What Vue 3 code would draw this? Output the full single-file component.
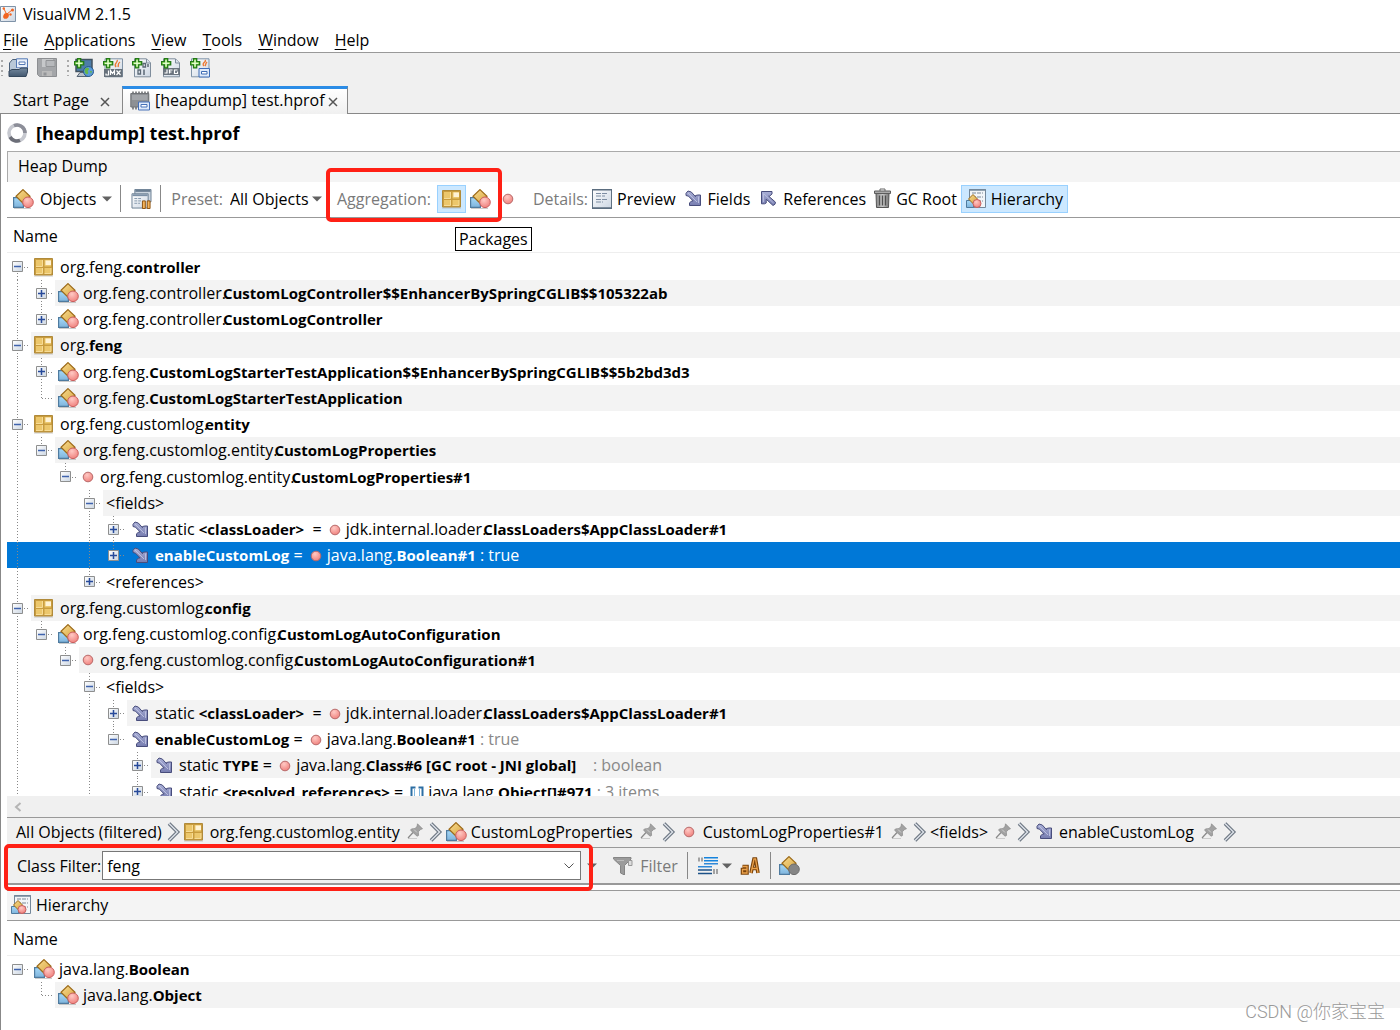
<script setup>
import { ref } from 'vue'

const menus = ['File', 'Applications', 'View', 'Tools', 'Window', 'Help']
const classFilter = ref('feng')
const preset = ref('All Objects')

const t = (text) => ({ text, kind: 'plain' })
const b = (text) => ({ text, kind: 'bold' })
const lap = (text) => ({ text, kind: 'bold lap' })
const dim = (text) => ({ text, kind: 'dim' })
const ball = { icon: 'ball' }
const array = { icon: 'array' }

// guides: which ancestor columns carry a line through this row
const rows = [
  { guides: [], first: true, box: 'minus', icon: 'package', parts: [t('org.feng.'), b('controller')] },
  { guides: [1], box: 'plus', icon: 'class', parts: [t('org.feng.controller.'), lap('CustomLogController$$EnhancerBySpringCGLIB$$105322ab')] },
  { guides: [1], last: true, box: 'plus', icon: 'class', parts: [t('org.feng.controller.'), lap('CustomLogController')] },
  { guides: [], box: 'minus', icon: 'package', parts: [t('org.'), b('feng')] },
  { guides: [1], box: 'plus', icon: 'class', parts: [t('org.feng.'), b('CustomLogStarterTestApplication$$EnhancerBySpringCGLIB$$5b2bd3d3')] },
  { guides: [1], last: true, icon: 'class', parts: [t('org.feng.'), b('CustomLogStarterTestApplication')] },
  { guides: [], box: 'minus', icon: 'package', parts: [t('org.feng.customlog.'), lap('entity')] },
  { guides: [1], last: true, box: 'minus', icon: 'class', parts: [t('org.feng.customlog.entity.'), lap('CustomLogProperties')] },
  { guides: [1, 0], last: true, box: 'minus', icon: 'ball', parts: [t('org.feng.customlog.entity.'), lap('CustomLogProperties#1')] },
  { guides: [1, 0, 0], box: 'minus', parts: [t('<fields>')] },
  { guides: [1, 0, 0, 1], box: 'plus', icon: 'field', parts: [t('static '), b('<classLoader>'), t('  = '), ball, t('jdk.internal.loader.'), lap('ClassLoaders$AppClassLoader#1')] },
  { guides: [1, 0, 0, 1], last: true, selected: true, box: 'plus', icon: 'field', parts: [b('enableCustomLog'), t(' = '), ball, t('java.lang.'), b('Boolean#1'), dim(' : true')] },
  { guides: [1, 0, 0], last: true, box: 'plus', parts: [t('<references>')] },
  { guides: [], box: 'minus', icon: 'package', parts: [t('org.feng.customlog.'), lap('config')] },
  { guides: [1], last: true, box: 'minus', icon: 'class', parts: [t('org.feng.customlog.config.'), lap('CustomLogAutoConfiguration')] },
  { guides: [1, 0], last: true, box: 'minus', icon: 'ball', parts: [t('org.feng.customlog.config.'), lap('CustomLogAutoConfiguration#1')] },
  { guides: [1, 0, 0], box: 'minus', parts: [t('<fields>')] },
  { guides: [1, 0, 0, 1], box: 'plus', icon: 'field', parts: [t('static '), b('<classLoader>'), t('  = '), ball, t('jdk.internal.loader.'), lap('ClassLoaders$AppClassLoader#1')] },
  { guides: [1, 0, 0, 1], last: true, box: 'minus', icon: 'field', parts: [b('enableCustomLog'), t(' = '), ball, t('java.lang.'), b('Boolean#1'), dim(' : true')] },
  { guides: [1, 0, 0, 1, 0], box: 'plus', icon: 'field', parts: [t('static '), b('TYPE'), t(' = '), ball, t('java.lang.'), b('Class#6 [GC root - JNI global]'), dim('    : boolean')] },
  { guides: [1, 0, 0, 1, 0], box: 'plus', icon: 'field', parts: [t('static '), b('<resolved_references>'), t(' = '), array, t('java.lang.'), b('Object[]#971'), dim(' : 3 items')] },
]

const hierarchy = [
  { guides: [], first: true, last: true, box: 'minus', icon: 'class', parts: [t('java.lang.'), b('Boolean')] },
  { guides: [0], last: true, icon: 'class', parts: [t('java.lang.'), b('Object')] },
]

const trees = { main: rows, sub: hierarchy }

const crumbs = [
  { icon: 'package', text: 'org.feng.customlog.entity' },
  { icon: 'class', text: 'CustomLogProperties' },
  { icon: 'ball', text: 'CustomLogProperties#1' },
  { text: '<fields>' },
  { icon: 'field', text: 'enableCustomLog' },
]

const launchers = ['remote', 'jmx', 'core', 'jfr', 'snapshot']

const ownLine = (row) => {
  if (row.first && row.last) return 'none'
  if (row.first) return 'lower'
  return row.last ? 'upper' : 'full'
}
</script>

<template>
  <svg class="sheet" aria-hidden="true">
    <defs>
      <linearGradient id="gold" x1="0" y1="0" x2="1" y2="1"><stop offset="0" stop-color="#f8dc90" /><stop offset="1" stop-color="#d9a541" /></linearGradient>
      <linearGradient id="sky" x1="0" y1="0" x2="0" y2="1"><stop offset="0" stop-color="#a5d8f7" /><stop offset="1" stop-color="#7fb4dc" /></linearGradient>
      <radialGradient id="rose" cx=".4" cy=".3" r=".7"><stop offset="0" stop-color="#ffc9c4" /><stop offset="1" stop-color="#f0837f" /></radialGradient>
      <linearGradient id="violet" x1="0" y1="0" x2="0" y2="1"><stop offset="0" stop-color="#a9afd6" /><stop offset="1" stop-color="#777db0" /></linearGradient>
      <linearGradient id="paper" x1="0" y1="0" x2="1" y2="1"><stop offset="0" stop-color="#fff" /><stop offset="1" stop-color="#ccd6e2" /></linearGradient>
      <linearGradient id="steel" x1="0" y1="0" x2="0" y2="1"><stop offset="0" stop-color="#74899f" /><stop offset="1" stop-color="#43586f" /></linearGradient>
      <linearGradient id="tin" x1="0" y1="0" x2="1" y2="0"><stop offset="0" stop-color="#888" /><stop offset=".5" stop-color="#c8c8c8" /><stop offset="1" stop-color="#777" /></linearGradient>

      <symbol id="i-class" viewBox="0 0 21 20">
        <path d="M1 19.500h17" stroke="#999" stroke-opacity=".5" />
        <path d="M.6 8.600h9.800v9.800H.6z" fill="url(#sky)" stroke="#4f7b9f" stroke-width="1.200" />
        <path d="M10 .6 17 7.300l-7 6.900-7-6.900z" fill="url(#gold)" stroke="#9c6a19" stroke-width="1.200" />
        <circle cx="15" cy="13.300" r="5.300" fill="url(#rose)" stroke="#c9605f" />
      </symbol>
      <symbol id="i-class-off" viewBox="0 0 21 20">
        <path d="M.6 8.600h9.800v9.800H.6z" fill="url(#sky)" stroke="#4f7b9f" stroke-width="1.200" />
        <path d="M10 .6 17 7.300l-7 6.900-7-6.900z" fill="url(#gold)" stroke="#9c6a19" stroke-width="1.200" />
        <circle cx="15" cy="13.300" r="5.300" fill="#858585" stroke="#6c6c6c" />
      </symbol>
      <symbol id="i-package" viewBox="0 0 20 20">
        <path d="M0 19h19" stroke="#999" stroke-opacity=".5" />
        <path d="M.5 1.500h18v16.500H.5z" fill="#c99c3e" stroke="#b08a3a" />
        <path d="M2 3h6.500v6.500H2zM2 11h6.500v5.500H2zM10.500 11H17v5.500h-6.500zM10.500 3H17v6.500h-6.500z" fill="#ecc76c" />
        <path d="M11.500 3.500H17V8h-5.500z" fill="#fff3d6" />
        <path d="M2 9.500h6.500V3M2 16.500h6.500V11M10.500 16.500H17V11" fill="none" stroke="#f7dc96" />
      </symbol>
      <symbol id="i-ball" viewBox="0 0 12 12">
        <circle cx="6" cy="6" r="4.800" fill="url(#rose)" stroke="#b86a6a" />
      </symbol>
      <symbol id="i-field" viewBox="0 0 17 17">
        <path d="M1 3.300 3 1l3.300 1 4.200 4.700V5.500L13 5h2.500v10.500H4.500V13l2-2h1.700L3.500 6.200 1 5.500z" fill="url(#violet)" stroke="#484d7c" />
        <path d="m3 3 9 9M13.500 6.500V13" stroke="#c5c9e6" stroke-opacity=".8" fill="none" />
      </symbol>
      <symbol id="i-reference" viewBox="0 0 17 17">
        <path d="M1.500 1.500H12V4l-2.500 2.200H8.700l6.800 6-.5 2-2 1.300-6.800-6.300V13l-1.700.8H1.500z" fill="url(#violet)" stroke="#484d7c" />
        <path d="m4 4 9.500 9M3.500 3.500V12" stroke="#c5c9e6" stroke-opacity=".7" fill="none" />
      </symbol>
      <symbol id="i-array" viewBox="0 0 14 14">
        <path d="M5.500 1.500h-4v11h4M8.500 1.500h4v11h-4" fill="none" stroke="#2c6ea3" stroke-width="2" />
        <path d="M4.500 3v8M9.500 3v8" stroke="#7fb6de" />
      </symbol>
      <symbol id="i-plus" viewBox="0 0 11 11">
        <path d="M.5.5h10v10H.5z" fill="url(#paper)" stroke="#8e8f8f" />
        <path d="M2 5.500h7M5.500 2v7" stroke="#274a9a" stroke-width="1.500" />
      </symbol>
      <symbol id="i-minus" viewBox="0 0 11 11">
        <path d="M.5.5h10v10H.5z" fill="url(#paper)" stroke="#8e8f8f" />
        <path d="M2 5.500h7" stroke="#3f63ad" stroke-width="1.500" />
      </symbol>
      <symbol id="i-pin" viewBox="0 0 17 17">
        <path d="M1 15.500h9" stroke="#ccc" />
        <path d="M1 15 6 9.500" stroke="#888" stroke-width="1.200" />
        <path d="m10.500.8 5 5-1.800.6-2.400 2.400.3 3.600-1.500.8-6.600-6 1-1.300 3.600-.3 2-2.400z" fill="#a2a2a2" stroke="#8a8a8a" stroke-width=".7" />
        <path d="m7 6.500 3 3" stroke="#d0d0d0" />
      </symbol>
      <symbol id="i-next" viewBox="0 0 14 20">
        <path d="m2 1.500 8.500 8.500L2 18.500" fill="none" stroke="#66707c" stroke-width="3.600" />
        <path d="m2 1.500 8.500 8.500L2 18.500" fill="none" stroke="#d9dee5" stroke-width="1.600" />
      </symbol>
      <symbol id="i-caret" viewBox="0 0 10 6">
        <path d="M0 .5h10L5 5.500z" fill="#626262" />
      </symbol>
      <symbol id="i-app" viewBox="0 0 16 16">
        <path d="M.5.5h15v15H.5z" fill="url(#paper)" stroke="#7f93a8" />
        <path d="M6 7c3-.5 3.500 2 2.500 4s-4 2.500-5 1S4 7 6 7z" fill="#f26522" />
        <circle cx="3.800" cy="2.500" r="1.200" fill="#f26522" /><circle cx="12.500" cy="4" r="1.500" fill="#f26522" />
        <circle cx="10.500" cy="8.500" r="1.200" fill="#f26522" /><path d="m7 8 5-4M6 7 4 3" stroke="#f26522" />
      </symbol>
      <symbol id="i-open" viewBox="0 0 20 20">
        <path d="M1.500 18V5l3-3.500h4V10" fill="#b9c8d8" stroke="#4c6078" />
        <path d="M8.500.8h11v9h-11z" fill="#e8effa" stroke="#5479b5" /><path d="M11 4h6v2.500h-6z" fill="#fff" stroke="#5479b5" />
        <path d="M1 18.500V13l3-1.500h7l2-1.500h6.500v4l-1.500 4.500z" fill="url(#steel)" stroke="#34475c" />
      </symbol>
      <symbol id="i-save" viewBox="0 0 20 20">
        <path d="M.5.5h19v18h-17l-2-2z" fill="#a4a6a9" stroke="#8c8e91" />
        <path d="M5 1h11v8H5z" fill="#c6c8ca" /><path d="M9 2.500h9v6H9z" fill="#b7b9bc" stroke="#919396" />
        <path d="M5 13h10v5H5z" fill="#bbb" /><path d="M6.500 14.500h3v3h-3z" fill="#939598" />
      </symbol>
      <symbol id="i-add" viewBox="0 0 20 20">
        <path d="M3.500.7h3.200v3h3v3.200h-3v3H3.500v-3h-3V3.700h3z" fill="#8fdf5a" stroke="#237a17" stroke-width="1.300" />
        <path d="M5 2v6.500M2 5.300h6.200" stroke="#f2ffe8" />
      </symbol>
      <symbol id="i-remote" viewBox="0 0 20 20">
        <path d="M2 1.500h16v12H2z" fill="#4d7da8" stroke="#41525f" stroke-width="1.500" />
        <path d="M6 14.500h7l2 4H3z" fill="#b7c0ca" stroke="#566474" />
        <circle cx="14.500" cy="13.500" r="5" fill="#5b9bd8" stroke="#27598c" />
        <path d="M11 11c2-2 4-1 4 0s-2 1.500-1 3-1 3-2 2-2-3-1-5zM16 13h2l-1 3z" fill="#66b648" />
        <use href="#i-add" />
      </symbol>
      <symbol id="i-jmx" viewBox="0 0 20 20">
        <path d="M2 .8h17.500v18H2z" fill="url(#paper)" stroke="#8193a6" />
        <path d="M14 2c2 2-4 3-1 7M17 4c-3 2-1 3-2 5" fill="none" stroke="#ec7a35" stroke-width="1.400" />
        <path d="M1 11h18.500v8H1z" fill="#66707a" />
        <path d="M5.500 12.500V17H3v-1.500M7.500 17v-4.500l2 3 2-3V17M13.500 12.500l4 4.500M17.500 12.500l-4 4.500" fill="none" stroke="#fff" stroke-width="1.200" />
        <use href="#i-add" />
      </symbol>
      <symbol id="i-core" viewBox="0 0 20 20">
        <path d="M2.500.8h12l4 4v14h-16z" fill="url(#paper)" stroke="#7f8d9c" />
        <path d="M14.500 1v4h4" fill="#dbe3ec" stroke="#7f8d9c" />
        <path d="M11 5.500h2.500V9H11zM6 12h2.500v4H6z" fill="none" stroke="#5b6875" stroke-width="1.300" />
        <path d="M16 6v3M12 11.500V17" stroke="#5b6875" stroke-width="1.500" />
        <use href="#i-add" />
      </symbol>
      <symbol id="i-jfr" viewBox="0 0 20 20">
        <path d="M2.500.8h12l4 4v14h-16z" fill="url(#paper)" stroke="#7f8d9c" />
        <path d="M14.500 1v4h4" fill="#dbe3ec" stroke="#7f8d9c" />
        <path d="M2 10h17v7H2z" fill="#6b747e" />
        <path d="M3.500 15h2.500v-3.500M8.500 15.500V12h3M8.500 14h2M16.500 12h-3v3.500h3v-2" fill="none" stroke="#fff" stroke-width="1.200" />
        <use href="#i-add" />
      </symbol>
      <symbol id="i-snapshot" viewBox="0 0 20 20">
        <path d="M1.500.8H19v18H1.500z" fill="url(#paper)" stroke="#7f93a8" />
        <path d="M15 2c2 2-4 3-1 6M17 4c-2 2-1 3-2 4" fill="none" stroke="#ec7a35" stroke-width="1.400" />
        <path d="M9 10.500h10.500v8.500H9z" fill="#dfeafa" stroke="#3f6cb5" /><path d="M11.500 13.500H17V16h-5.500z" fill="#fff" stroke="#3f6cb5" />
        <use href="#i-add" />
      </symbol>
      <symbol id="i-heap" viewBox="0 0 20 20">
        <path d="M3 .5v18M6 .5v18M9 .5v18M12 .5v14M15 .5v14M18 .5v12" stroke="#66686b" stroke-width="1.500" />
        <path d="M.8 2.500h18v13.500H.8z" fill="#8d9094" stroke="#6f7276" /><path d="M2 4h15.500v5H2z" fill="#a3a6aa" />
        <path d="M8.500 11h11v8h-11z" fill="#dfeafa" stroke="#4670b8" /><path d="M11 13.500h6V16h-6z" fill="#fff" stroke="#4670b8" />
      </symbol>
      <symbol id="i-ring" viewBox="0 0 20 20">
        <circle cx="10" cy="10" r="8" fill="none" stroke="#c6c8cf" stroke-width="3.600" />
        <path d="M7 2.600A8 8 0 0 1 18 10" fill="none" stroke="#8c8e98" stroke-width="3.600" />
        <path d="M3 14A8 8 0 0 0 13 17.400" fill="none" stroke="#6c6e78" stroke-width="3.600" />
      </symbol>
      <symbol id="i-compare" viewBox="0 0 21 21">
        <path d="M3.500.5h17v13h-17z" fill="#cbd5df" stroke="#6a7e92" /><path d="M4 2h16" stroke="#6a7e92" stroke-width="2" />
        <path d="M.5 5h17v15H.5z" fill="url(#paper)" stroke="#6a7e92" /><path d="M1 6.500h16" stroke="#7b90a6" stroke-width="2" />
        <path d="M3 10h8M3 12.500h7M3 15h6" stroke="#8397ab" stroke-dasharray="3 1" />
        <path d="M11.500 12.500h3v8h-3zM16.500 12.500h3v8h-3z" fill="#f5b45a" stroke="#8b4f0c" />
      </symbol>
      <symbol id="i-preview" viewBox="0 0 20 20">
        <path d="M.5.500h19v18.500H.5z" fill="url(#paper)" stroke="#5f7182" /><path d="M0 19.200h20M0 .8h20" stroke="#5b6d7f" stroke-width="1.500" />
        <path d="M4 4.500h12M4 7h9M4 10.500h12M4 13h7" stroke="#7d8da2" stroke-dasharray="5 1" />
      </symbol>
      <symbol id="i-trash" viewBox="0 0 17 21">
        <path d="M2 5.500h13L14.500 19.500h-12z" fill="url(#tin)" stroke="#555" />
        <path d="M5.500 7.500v10M8.500 7.500v10M11.500 7.500v10" stroke="#505050" stroke-width="1.300" />
        <path d="M.5 3h16v2.500H.5z" fill="#aaa" stroke="#5c5c5c" /><path d="M6 3V1h5v2" fill="none" stroke="#666" />
      </symbol>
      <symbol id="i-hierarchy" viewBox="0 0 20 20">
        <path d="M3.500.500h16v18h-16z" fill="#f2f5f8" stroke="#73879a" /><path d="M3 1h17" stroke="#73879a" stroke-width="1.500" />
        <path d="M6 4h11M6 8h11M6 12h11" stroke="#b6bec7" stroke-width="1.800" stroke-dasharray="4 1" />
        <path d="M.5 11.500h7v7h-7z" fill="url(#sky)" stroke="#4f7b9f" />
        <path d="m7 5.500 4.500 4.500L7 14.500 2.500 10z" fill="url(#gold)" stroke="#9c6a19" />
        <circle cx="11" cy="14.500" r="4" fill="url(#rose)" stroke="#c9605f" />
      </symbol>
      <symbol id="i-funnel" viewBox="0 0 20 18">
        <path d="M.5.500h17.500v1.500l-6.500 6.500v9.500l-4-2V8.500L.5 2z" fill="#9b9b9b" stroke="#858585" /><path d="M4 3.500h7" stroke="#bcbcbc" />
        <path d="M15.500 3.500h3.500v5h-3.500z" fill="#ddd" stroke="#999" />
      </symbol>
      <symbol id="i-lines" viewBox="0 0 20 18">
        <path d="M6 .8h14M6 3.800h14" stroke="#1583dd" stroke-width="1.400" /><path d="M6 6.800h14M0 9.800h14" stroke="#2e88d8" stroke-width="1.400" />
        <path d="M0 13h14M0 16.500h14" stroke="#1c5288" stroke-width="1.400" />
        <path d="M1 .5v4M4 .5v4M16 12v5M19 12v5" stroke="#555" />
      </symbol>
      <symbol id="i-case" viewBox="0 0 20 18">
        <path d="M2.500 9.500h4.500v6.500H2.500v-3.500H7M11 16 14 2h1.500L18 16M12 11.500h5" fill="none" stroke="#7b430a" stroke-width="3.600" />
        <path d="M2.500 9.500h4.500v6.500H2.500v-3.500H7M11 16 14 2h1.500L18 16M12 11.500h5" fill="none" stroke="#eba24c" stroke-width="1.300" />
      </symbol>
    </defs>
  </svg>

  <div class="window">
    <header class="title"><svg class="s16"><use href="#i-app" /></svg><span>VisualVM 2.1.5</span></header>
    <nav class="menu">
      <button v-for="m in menus" :key="m" type="button"><u>{{ m[0] }}</u>{{ m.slice(1) }}</button>
    </nav>
    <div class="launch">
      <i class="grip" />
      <button type="button" aria-label="Load"><svg class="s20"><use href="#i-open" /></svg></button>
      <button type="button" aria-label="Save"><svg class="s20"><use href="#i-save" /></svg></button>
      <i class="grip" />
      <button v-for="l in launchers" :key="l" type="button" :aria-label="l"><svg class="s20"><use :href="'#i-' + l" /></svg></button>
    </div>
    <div class="tabs">
      <div class="tab"><span>Start Page</span><button type="button" class="close" aria-label="Close Start Page"><svg viewBox="0 0 10 10"><path d="m1 1 8 8M9 1 1 9" /></svg></button></div>
      <div class="tab active"><svg class="s20"><use href="#i-heap" /></svg><span>[heapdump] test.hprof</span><button type="button" class="close" aria-label="Close heap dump"><svg viewBox="0 0 10 10"><path d="m1 1 8 8M9 1 1 9" /></svg></button></div>
      <div class="rest" />
    </div>

    <main class="body">
      <h1><svg class="s20"><use href="#i-ring" /></svg>[heapdump] test.hprof</h1>
      <h2>Heap Dump</h2>

      <div class="tools">
        <button type="button" class="objects"><svg class="s21"><use href="#i-class" /></svg>Objects<svg class="caret"><use href="#i-caret" /></svg></button>
        <i class="bar" />
        <button type="button" aria-label="Compare"><svg class="s21"><use href="#i-compare" /></svg></button>
        <i class="bar" />
        <label class="preset"><span class="muted">Preset:</span><select v-model="preset"><option>All Objects</option></select><svg class="caret"><use href="#i-caret" /></svg></label>
        <div class="aggregation">
          <span class="muted">Aggregation:</span>
          <button type="button" class="pressed square" aria-label="Packages"><svg class="s20"><use href="#i-package" /></svg></button>
          <button type="button" aria-label="Classes"><svg class="s21"><use href="#i-class" /></svg></button>
          <div class="tip" role="tooltip">Packages</div>
          <div class="mark" />
        </div>
        <button type="button" class="instances" aria-label="Instances"><svg class="s12"><use href="#i-ball" /></svg></button>
        <span class="muted">Details:</span>
        <button type="button" class="preview"><svg class="s20"><use href="#i-preview" /></svg>Preview</button>
        <button type="button" class="arrow"><svg class="s17"><use href="#i-field" /></svg>Fields</button>
        <button type="button" class="arrow"><svg class="s17"><use href="#i-reference" /></svg>References</button>
        <button type="button" class="root"><svg class="trash"><use href="#i-trash" /></svg>GC Root</button>
        <button type="button" class="pressed"><svg class="s20"><use href="#i-hierarchy" /></svg>Hierarchy</button>
      </div>

      <template v-for="(list, name) in trees" :key="name">
        <template v-if="name === 'sub'">
          <div class="scroll"><svg viewBox="0 0 8 10"><path d="M6.500 1 2 5l4.500 4" /></svg></div>
          <nav class="crumbs">
            <a href="#">All Objects (filtered)</a>
            <svg class="next"><use href="#i-next" /></svg>
            <template v-for="c in crumbs" :key="c.text">
              <a href="#" :class="c.icon"><svg v-if="c.icon" :class="'ic-' + c.icon"><use :href="'#i-' + c.icon" /></svg>{{ c.text }}</a>
              <svg class="s17 pin"><use href="#i-pin" /></svg>
              <svg class="next"><use href="#i-next" /></svg>
            </template>
          </nav>
          <form class="filter" @submit.prevent>
            <label for="class-filter">Class Filter:</label>
            <div class="combo">
              <input id="class-filter" v-model="classFilter" type="text" />
              <button type="button" aria-label="History"><svg viewBox="0 0 10 6"><path d="m.5.5 4.500 4.500L9.500.5" /></svg></button>
            </div>
            <svg class="caret"><use href="#i-caret" /></svg>
            <button type="submit" class="apply"><svg><use href="#i-funnel" /></svg>Filter</button>
            <i class="bar" />
            <button type="button" class="lines" aria-label="Filter mode"><svg><use href="#i-lines" /></svg><svg class="caret"><use href="#i-caret" /></svg></button>
            <button type="button" class="case" aria-label="Match case"><svg><use href="#i-case" /></svg></button>
            <i class="bar" />
            <button type="button" aria-label="Scope"><svg class="s21"><use href="#i-class-off" /></svg></button>
            <div class="mark" />
          </form>
          <h3><svg class="s20"><use href="#i-hierarchy" /></svg>Hierarchy</h3>
        </template>
        <div class="colhead">Name</div>
        <ul class="tree" :class="name">
          <li v-for="(row, i) in list" :key="i" :class="{ selected: row.selected }">
            <i v-for="(g, k) in row.guides" :key="k" class="cell" :class="{ full: g }" />
            <span class="cell own" :class="ownLine(row)">
              <button v-if="row.box" type="button" :aria-label="row.box === 'plus' ? 'Expand' : 'Collapse'"><svg><use :href="'#i-' + row.box" /></svg></button>
            </span>
            <span class="item">
              <svg v-if="row.icon" :class="'ic-' + row.icon"><use :href="'#i-' + row.icon" /></svg>
              <span class="text"><template v-for="(p, k) in row.parts" :key="k"><svg v-if="p.icon" class="inline" :class="p.icon"><use :href="'#i-' + p.icon" /></svg><span v-else :class="p.kind">{{ p.text }}</span></template></span>
            </span>
          </li>
        </ul>
      </template>
    </main>
    <div class="credit">CSDN @你家宝宝</div>
  </div>
</template>

<style>
body { margin: 0; background: #fff; }
</style>

<style scoped>
* { box-sizing: border-box; }
.sheet { position: absolute; width: 0; height: 0; }
.window {
  position: relative;
  display: flex;
  flex-direction: column;
  height: 100vh;
  overflow: hidden;
  background: #fff;
  color: #000;
  font: 16px/24px "Open Sans", "Noto Sans", sans-serif;
  white-space: nowrap;
}
button { display: inline-flex; align-items: center; padding: 0; border: 0; background: none; color: inherit; font: inherit; }
svg { display: block; flex: none; }
.s12 { width: 12px; height: 12px; }
.s16 { width: 16px; height: 16px; }
.s17 { width: 17px; height: 17px; }
.s20 { width: 20px; height: 20px; }
.s21 { width: 21px; height: 20px; }
.caret { width: 10px; height: 6px; }
.muted { color: #7a7a7a; }

.title { display: flex; align-items: center; gap: 7px; height: 28px; }
.menu { display: flex; align-items: center; gap: 16px; height: 25px; padding-left: 3px; border-bottom: 1px solid #999; }
.menu u { text-underline-offset: 3px; text-decoration-thickness: 1px; }
.launch { display: flex; align-items: center; gap: 9px; height: 30px; background: #f0f0f0; }
.grip { width: 2px; height: 16px; margin-left: 1px; background: repeating-linear-gradient(#aaa 0 2px, transparent 2px 5px); }
.launch .grip { margin-right: -4px; }
.tabs { display: flex; align-items: stretch; height: 31px; padding-top: 3px; background: #f0f0f0; }
.tab { display: flex; align-items: center; padding: 0 12px 0 13px; border-bottom: 1px solid #888; }
.close { margin: 4px 0 0 11px; }
.close svg { width: 10px; height: 10px; fill: none; stroke: #555; stroke-width: 1.5; }
.tab.active { gap: 5px; padding: 0 9px 3px 7px; border: 1px solid #888; border-top: 3px solid #2b8ce6; border-bottom: 0; background: linear-gradient(#fff, #f0f0f0); }
.active svg { margin-top: 2px; }
.active .close { margin: 3px 0 0 -2px; }
.active .close svg { margin: 0; }
.rest { flex: 1; border-bottom: 1px solid #888; }

.body { display: flex; flex: 1; flex-direction: column; min-height: 0; padding-left: 6px; border-left: 1px solid #888; }
h1, h2, h3 { margin: 0; font-weight: 400; font-size: 16px; }
h1 { display: flex; align-items: center; gap: 9px; height: 37px; font-weight: 700; font-size: 18px; }
h2 { height: 31px; padding-left: 10px; border: solid #aaa; border-width: 1px 0 0 1px; background: #f4f4f4; line-height: 29px; }
.tools { display: flex; align-items: center; height: 36px; padding: 0 0 2px 6px; border-bottom: 1px solid #999; }
.bar { width: 1px; height: 27px; background: #888; }
.objects { gap: 6px; margin-right: 8px; }
.tools > .bar + button { margin: 0 8px 0 10px; }
.preset { display: flex; align-items: center; gap: 3px; margin-left: 10px; }
.preset select { padding: 0; border: 0; background: none; color: inherit; font: inherit; appearance: none; margin-left: 4px; }
.aggregation { position: relative; display: flex; align-items: center; gap: 4px; margin-left: 15px; }
.pressed { gap: 5px; height: 28px; padding: 0 4px; border: 1px solid #99d1ff; background: #cce8ff; }
.square { margin-left: 2px; padding: 0 3px 0 4px; }
.tip { position: absolute; top: 42px; left: 118px; padding: 0 3px; border: 1px solid #000; background: #fff; line-height: 22px; z-index: 2; }
.mark { position: absolute; border: 4px solid #ff2015; border-radius: 5px; pointer-events: none; }
.aggregation .mark { inset: -17px -11px -9px; }
.instances { margin: 0 19px 0 11px; }
.preview { gap: 5px; margin: 0 9px 0 4px; }
.arrow { gap: 6px; margin-right: 10px; }
.root { gap: 5px; margin: 0 4px 0 -2px; }
.trash { width: 17px; height: 21px; }

.colhead { flex: none; height: 35px; padding-left: 6px; border-bottom: 1px solid #eee; line-height: 36px; }
.tree { margin: 0; padding: 0; overflow: hidden; list-style: none; }
.main { flex: 1; min-height: 0; }
.sub { flex: none; padding-bottom: 22px; }
li { display: flex; height: 26px; }
.main li:nth-child(4n + 1) { height: 27px; }
.cell { flex: none; width: 24px; background-repeat: no-repeat; background-position: 10px 0; background-size: 1px 100%; }
.full, .upper, .lower { background-image: repeating-linear-gradient(#888 0 1px, transparent 1px 3px); }
.upper { background-size: 1px 50%; }
.lower { background-size: 1px 50%; background-position: 10px 100%; }
.own { position: relative; display: flex; align-items: center; padding-left: 5px; }
.own::after { content: ""; position: absolute; top: 50%; left: 11px; right: 2px; height: 1px; background: repeating-linear-gradient(90deg, #888 0 1px, transparent 1px 3px); }
.own button { position: relative; z-index: 1; }
.own svg { width: 11px; height: 11px; }
.item { display: flex; flex: 1; align-items: center; padding-left: 3px; }
li:nth-child(even) .item { background: #f3f3f3; }
li.selected, li.selected .item { background: #0078d7; color: #fff; }
.text { white-space: pre; line-height: 26px; }
.ic-package { width: 20px; height: 20px; margin-right: 6px; }
.ic-class { width: 21px; height: 20px; margin-right: 4px; }
.ic-ball { width: 12px; height: 12px; margin-right: 6px; }
.ic-field { width: 17px; height: 17px; margin: 0 6px 0 2px; }
.bold { font-weight: 700; font-size: 15px; }
.lap { margin-left: -3px; }
.dim { color: #888; }
.selected .dim { color: #fff; }
.inline { display: inline-block; width: 12px; height: 12px; margin: 0 5px 0 3px; vertical-align: -1px; }
.array { width: 14px; height: 14px; margin-right: 4px; vertical-align: -2px; }

.scroll { flex: none; height: 22px; padding: 6px 0 0 7px; border-bottom: 1px solid #999; background: #f0f0f0; }
.scroll svg { width: 8px; height: 10px; fill: none; stroke: #b5b5b5; stroke-width: 2; }
.crumbs { display: flex; flex: none; align-items: center; height: 30px; padding: 0 0 2px 9px; border-bottom: 1px solid #999; background: #f0f0f0; }
.crumbs a { display: flex; align-items: center; color: inherit; text-decoration: none; }
.next { width: 14px; height: 20px; margin: 0 3px 0 5px; }
.pin { margin-left: 7px; }
.crumbs .ball { margin-left: 4px; }
.crumbs .ball svg { margin-right: 8px; }
.filter { position: relative; display: flex; flex: none; align-items: center; height: 37px; padding-left: 10px; border-bottom: 2px solid #999; background: #f0f0f0; }
.filter label { margin-right: 1px; }
.combo { display: flex; flex: 0 1 479px; align-items: center; height: 29px; padding: 0 6px 0 4px; border: 1px solid #777; background: #fff; }
.combo input { flex: 1; min-width: 0; padding: 0; border: 0; outline: 0; background: none; color: inherit; font: inherit; }
.combo button svg { width: 10px; height: 6px; fill: none; stroke: #555; }
.combo + .caret { margin-left: 6px; }
.apply { gap: 7px; margin: 0 9px 0 16px; color: #7a7a7a; }
.apply svg, .lines svg:first-child, .case svg { width: 20px; height: 18px; }
.lines { gap: 4px; margin: 0 8px 0 10px; }
.lines .caret { width: 10px; height: 6px; }
.case { margin-right: 10px; }
.filter .bar + button:last-of-type { margin-left: 8px; }
.filter .mark { top: -4px; bottom: -8px; left: -3px; width: 589px; }
h3 { display: flex; flex: none; align-items: center; gap: 5px; height: 31px; margin-top: 5px; padding: 0 0 1px 4px; border: solid #999; border-width: 1px 0; background: #f4f4f4; }
.credit { position: absolute; right: 15px; bottom: 6px; color: #999; font: 300 18px/24px Roboto, "Noto Sans CJK SC", sans-serif; text-shadow: 1px 1px 1px #fff; }
</style>
